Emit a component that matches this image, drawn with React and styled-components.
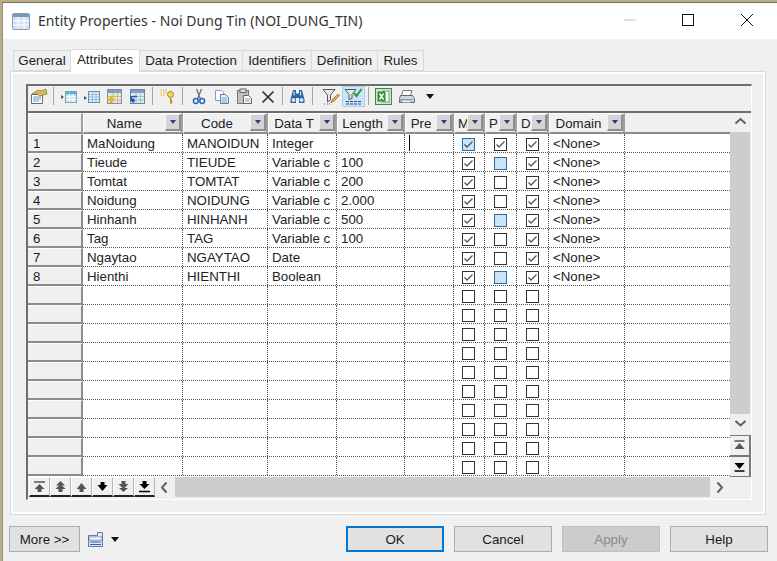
import React from "react";
import styled, { createGlobalStyle } from "styled-components";

const Global = createGlobalStyle`
  html, body { margin: 0; padding: 0; width: 777px; height: 561px; overflow: hidden; background: #b9ad84; }
  #root { width: 777px; height: 561px; }
  * { box-sizing: border-box; }
`;
const UI = `"Liberation Sans", Arial, sans-serif`;
const TITLE = `"Noto Sans", "Open Sans", sans-serif`;

const Win = styled.div`
  margin: 2px 0 0 2px; width: 775px; height: 559px; background: #f0f0f0;
  border-left: 1px solid #8d8d8d; border-top: 1px solid #6f6f6f;
  display: flex; flex-direction: column; font-family: ${UI}; color: #1a1a1a;
`;
const TitleBar = styled.div`
  height: 36px; background: #fff; display: flex; align-items: center; padding-left: 9px; flex: none;
`;
const TitleText = styled.div`
  font-family: ${TITLE}; font-size: 14px; color: #333; margin-left: 8px; flex: 1; white-space: nowrap;
  letter-spacing: .05px; padding-bottom: 2px;
`;
const WinBtn = styled.div`
  width: ${p => p.$w || 58}px; height: 36px; display: flex; align-items: center; justify-content: center; flex: none;
  padding-bottom: 2px;
`;
const Tabs = styled.div`
  display: flex; align-items: flex-end; height: 32px; padding-left: 10px; flex: none; position: relative; z-index: 1;
`;
const Tab = styled.div`
  height: ${p => (p.$active ? 23 : 21)}px; width: ${p => p.$w}px;
  background: ${p => (p.$active ? "#fff" : "#f0f0f0")};
  border: 1px solid #d9d9d9; border-bottom: ${p => (p.$active ? "none" : "1px solid #d9d9d9")};
  border-left: ${p => (p.$first ? "1px solid #d9d9d9" : "none")};
  margin-bottom: ${p => (p.$active ? -1 : 0)}px;
  font-size: 13.3px; display: flex; align-items: center; justify-content: center; padding-bottom: ${p => (p.$active ? 3 : 0)}px;
  white-space: nowrap; color: #222;
`;
const Panel = styled.div`
  width: 756px; height: 444px; margin-left: 7px; flex: none;
  border: 1px solid #d9d9d9; box-shadow: inset 0 0 0 2px #fff;
  padding: 12px 13px 0 15px;
`;
const Grid = styled.div`
  width: 726px; height: 416px; border-left: 2px solid #6e6e6e; border-top: 2px solid #6e6e6e;
  border-right: 1px solid #fff; border-bottom: 1px solid #fff;
  display: flex; flex-direction: column; background: #f0f0f0;
`;
const Toolbar = styled.div`
  height: 27px; display: flex; align-items: flex-start; margin-left: -1px; flex: none;
  position: relative;
  &::after { content: ""; position: absolute; left: 1px; right: 0; bottom: 0; height: 2px; background: #6e6e6e; }
`;
const ToolBtn = styled.div`
  width: 23px; height: 21px; display: flex; align-items: center; justify-content: center; flex: none;
  background: ${p => (p.$on ? "#cce4f7" : "transparent")};
  border: 1px solid ${p => (p.$on ? "#a8d0ef" : "transparent")};
`;
const ToolSep = styled.div`
  width: ${p => p.$w}px; height: 20px; flex: none; position: relative;
  &::after { content: ""; position: absolute; left: 3px; top: 1px; bottom: 1px; width: 1px; background: #a6a6a6; }
`;
const Main = styled.div`
  display: flex; height: 385px; flex: none;
`;
const Table = styled.div`
  width: 702px; flex: none; display: flex; flex-direction: column; background: #fff; height: 364px;
`;
const HeadRow = styled.div`
  display: flex; height: 21px; background: #f0f0f0; flex: none;
`;
const HeadCell = styled.div`
  width: ${p => p.$w}px; flex: none; height: 21px; display: flex; align-items: center; position: relative;
  border-right: 2px solid #a0a0a0; border-bottom: 2px solid #8c8c8c; font-size: 13.3px; color: #222;
  border-left: 1px solid #fff; border-top: 1px solid #fff;
  padding-right: 16px; white-space: nowrap;
`;
const HeadLabel = styled.span`
  flex: 1; text-align: ${p => (p.$left ? "left" : "center")}; padding-left: ${p => (p.$left ? 3 : 0)}px;
`;
const Sort = styled.div`
  position: absolute; right: 0; top: 0; width: 16px; height: 17px; background: #d4d4d4;
  border-top: 1px solid #f4f4f4; border-left: 1px solid #f4f4f4; border-right: 2px solid #8f8f8f; border-bottom: 2px solid #8f8f8f;
  display: flex; align-items: center; justify-content: center;
  &::after { content: ""; border-left: 3.5px solid transparent; border-right: 3.5px solid transparent; border-top: 4px solid #45307f; }
`;
const HeadEmpty = styled.div`
  flex: 1; height: 21px; border-bottom: 2px solid #8c8c8c; background: #f0f0f0;
`;
const Row = styled.div`
  display: flex; height: 19px; flex: none; border-bottom: 1px dotted #555;
`;
const RowHead = styled.div`
  width: 55px; margin-bottom: -1px; height: 19px; flex: none; background: #f0f0f0; border-right: 2px solid #8c8c8c; border-bottom: 2px solid #8c8c8c;
  border-top: 1px solid #fff;
  font-size: 13.3px; padding-left: 5px; line-height: 17px;
`;
const Cell = styled.div`
  width: ${p => p.$w}px; flex: none; height: 18px; border-right: 1px dotted #555; font-size: 13.3px; line-height: 19px;
  padding-left: 4px; white-space: nowrap; overflow: hidden; color: #222; position: relative;
  display: ${p => (p.$center ? "flex" : "block")}; align-items: center; justify-content: center;
  ${p => (p.$center ? `padding: 2px ${p.$pr || 0}px 0 0;` : "")}
`;
const Fill = styled.div`flex: 1;`;
const Caret = styled.div`
  position: absolute; left: 4px; top: 1px; width: 1px; height: 16px; background: #000;
`;
const Box = styled.div`
  width: 13px; height: 13px; border: 1px solid ${p => (p.$blue ? "#2a6a9e" : "#333")};
  background: ${p => (p.$blue ? "#cce4f7" : "#fff")}; display: flex; align-items: center; justify-content: center;
`;
const VScroll = styled.div`
  width: 20px; flex: none; display: flex; flex-direction: column; height: 385px;
`;
const VArrow = styled.div`
  height: ${p => p.$h}px; flex: none; display: flex; align-items: center; justify-content: center;
`;
const VThumb = styled.div`
  height: 282px; flex: none; background: #cdcdcd;
`;
const NavV = styled.div`
  height: 21px; width: 21px; flex: none; display: flex; align-items: center; justify-content: center;
  background: #f0f0f0; border-top: 1px solid #777; border-right: 2px solid #777; border-bottom: 1px solid #777;
`;
const HBar = styled.div`
  display: flex; height: 20px; flex: none; margin-top: -21px; position: relative; width: 702px; padding-left: 1px;
`;
const NavH = styled.div`
  width: 21px; height: 20px; flex: none; display: flex; align-items: center; justify-content: center;
  border-top: 1px solid #fff; border-left: 1px solid #fff; border-right: 1px solid #b5b5b5; border-bottom: 2px solid #222;
`;
const HArrow = styled.div`
  width: 20px; height: 20px; flex: none; display: flex; align-items: center; justify-content: center;
`;
const HThumb = styled.div`
  flex: 1; height: 20px; background: #cdcdcd;
`;
const Footer = styled.div`
  display: flex; align-items: center; padding: 11px 9px 0 6px; flex: none;
`;
const Btn = styled.div`
  width: ${p => p.$w || 98}px; height: 26px; flex: none; display: flex; align-items: center; justify-content: center;
  font-size: 13.3px; margin-left: ${p => p.$ml || 0}px;
  background: ${p => (p.$disabled ? "#cccccc" : "#e1e1e1")};
  border: ${p => (p.$def ? "2px solid #0078d7" : p.$disabled ? "1px solid #bfbfbf" : "1px solid #adadad")};
  color: ${p => (p.$disabled ? "#8a8a8a" : "#1a1a1a")};
`;
const ReportIcon = styled.div`
  margin-left: 8px; display: flex; align-items: center; gap: 8px; flex: 1;
`;

const TableIcon = () => (
  <svg width="18" height="17" viewBox="0 0 18 17">
    <rect x=".5" y=".5" width="17" height="16" rx="1" fill="#d4e3f4" stroke="#8b99ad" />
    <rect x="1" y="1" width="16" height="3" fill="#7398c4" />
    <path d="M1 8h16M1 12h16M6 4v12M12 4v12" stroke="#fff" strokeWidth="1" />
  </svg>
);

const gridTbl = (fill, head) => (
  <>
    <rect x="5.5" y="2.5" width="11" height="11" fill={fill} stroke="#7ba4c2" />
    <rect x="6" y="3" width="10" height="2.500" fill={head} />
    <path d="M6 7.500h10M6 10.500h10M9.500 5v8M13 5v8" stroke="#fff" />
  </>
);

const Drop = () => (
  <svg width="8" height="5" viewBox="0 0 8 5"><path d="M0 0h8L4 5z" fill="#111" /></svg>
);

const Ic = {
  props: (
    <svg width="18" height="17" viewBox="0 0 18 17">
      <path d="M1.500 6.500h11v9h-11z" fill="#fff" stroke="#6b6b6b" />
      <path d="M3 9h8M3 11h8M3 13h6" stroke="#6f9bc4" />
      <path d="M2 6l6-4 3 1 5-2 1 5-4 1-3 1-3-2z" fill="#dcb95a" stroke="#8a7230" strokeWidth=".7" />
    </svg>
  ),
  addEnd: (
    <svg width="18" height="16" viewBox="0 0 18 16">
      {gridTbl("#c6e8f1", "#58b6d6")}
      <path d="M1 6l3 2-3 2z" fill="#1f5f9c" />
    </svg>
  ),
  addIns: (
    <svg width="18" height="16" viewBox="0 0 18 16">
      <rect x="5.500" y="2.500" width="11" height="11" fill="#dcecf7" stroke="#6d8cab" />
      <path d="M6 5.500h10M6 8h10M6 10.500h10M9.500 3v10M13 3v10" stroke="#8bacc6" strokeWidth=".7" />
      <path d="M1 7l3 2-3 2z" fill="#1f5f9c" />
    </svg>
  ),
  addPlus: (
    <svg width="17" height="17" viewBox="0 0 17 17">
      <rect x="1.500" y="1.500" width="14" height="14" fill="#ece8cc" stroke="#8090a6" />
      <rect x="2" y="2" width="13" height="3" fill="#7aa0c6" />
      <path d="M7 5v10M11.500 5v10M2 8.500h13M2 12h13" stroke="#bcb377" strokeWidth=".8" />
      <path d="M5 8v7M1.500 11.500h7" stroke="#e4b62a" strokeWidth="2.400" />
    </svg>
  ),
  addLink: (
    <svg width="17" height="17" viewBox="0 0 17 17">
      <rect x="1.500" y="1.500" width="14" height="14" fill="#dcebf4" stroke="#6d85a0" />
      <rect x="2" y="2" width="13" height="3" fill="#7aa0c6" />
      <path d="M7 5v10M11.500 5v10M2 8.500h13M2 12h13" stroke="#98b8cd" strokeWidth=".8" />
      <path d="M8 8.500H4a2 2 0 0 0 0 4h2M5 10.500l-2.500 2 2.500 2" fill="none" stroke="#1d58a5" strokeWidth="1.600" />
    </svg>
  ),
  key: (
    <svg width="17" height="17" viewBox="0 0 17 17">
      <path d="M1.500 2h7M1.500 4.500h7M1.500 7h4" stroke="#e3c75b" strokeWidth="1.500" strokeDasharray="1.500 1" />
      <circle cx="11.500" cy="6.500" r="3" fill="#f1d36c" stroke="#a8841d" />
      <path d="M11.500 9.500v6l1.500-1v-1.200l-1-.5 1-.8" fill="#e7c24e" stroke="#a8841d" strokeWidth=".9" />
    </svg>
  ),
  cut: (
    <svg width="14" height="17" viewBox="0 0 14 17">
      <path d="M4.500 1l4 10M9.500 1l-4 10" stroke="#6d7176" strokeWidth="1.300" />
      <circle cx="3.800" cy="13" r="2.400" fill="none" stroke="#2f68b0" strokeWidth="1.500" />
      <circle cx="10.200" cy="13" r="2.400" fill="none" stroke="#2f68b0" strokeWidth="1.500" />
    </svg>
  ),
  copy: (
    <svg width="16" height="16" viewBox="0 0 16 16">
      <path d="M1.500 1.500h6l2 2v8h-8z" fill="#fff" stroke="#8d9db4" />
      <path d="M6.500 5.500h5l3 3v6h-8z" fill="#e2effa" stroke="#5580b3" />
      <path d="M8 9h5M8 11h5M8 13h5" stroke="#7ea3c9" />
    </svg>
  ),
  paste: (
    <svg width="17" height="17" viewBox="0 0 17 17">
      <rect x="1.500" y="2.500" width="11" height="13" fill="#c2c2c2" stroke="#777" />
      <rect x="4" y="1" width="6" height="3.500" fill="#ddd" stroke="#666" />
      <path d="M7.500 7.500h5l3 3v5h-8z" fill="#fff" stroke="#666" />
      <path d="M9 11h5M9 13h5" stroke="#999" />
    </svg>
  ),
  del: (
    <svg width="14" height="14" viewBox="0 0 14 14">
      <path d="M1.500 1.500l11 11M12.500 1.500l-11 11" stroke="#333" strokeWidth="1.700" />
    </svg>
  ),
  find: (
    <svg width="17" height="15" viewBox="0 0 17 15">
      <path d="M4 1h3v3.500h3V1h3l2.500 9.500v3.500h-5.500v-5h-3v5H1.500v-3.500z" fill="#2f639e" />
      <circle cx="4.500" cy="11" r="2" fill="#cfe2f5" />
      <circle cx="12.500" cy="11" r="2" fill="#cfe2f5" />
      <rect x="4.500" y="2.500" width="1.200" height="4" fill="#cfe2f5" />
      <rect x="11" y="2.500" width="1.200" height="4" fill="#cfe2f5" />
    </svg>
  ),
  filterPen: (
    <svg width="18" height="17" viewBox="0 0 18 17">
      <path d="M1 1.500h12l-4.500 5.500v5l-3 2v-7z" fill="#e9e9e9" stroke="#595959" />
      <path d="M10 12l6-6 1.500 1.500-6 6-2.500 1z" fill="#e3ac4d" stroke="#8a5b14" strokeWidth=".7" />
      <path d="M5 16h1M7 16h1M2 16h1" stroke="#555" />
    </svg>
  ),
  filterCheck: (
    <svg width="19" height="18" viewBox="0 0 19 18">
      <path d="M1 1.500h11l-4 5v4l-3 1v-5z" fill="#dfe8ee" stroke="#595959" />
      <path d="M10 5l2.500 3L17.500 1" fill="none" stroke="#2c9a2c" strokeWidth="2" />
      <path d="M2 13.500h15M2 16h15" stroke="#333b8a" strokeWidth="1.200" strokeDasharray="3 1" />
    </svg>
  ),
  excel: (
    <svg width="17" height="17" viewBox="0 0 17 17">
      <rect x=".5" y=".5" width="16" height="16" fill="#cfe6c9" stroke="#3c8a40" />
      <rect x="8" y="3" width="6" height="11" fill="#fff" stroke="#6fa56f" />
      <rect x="2.500" y="3.500" width="8" height="10" fill="#2f8f3a" />
      <path d="M4.500 5.500l4 6M8.500 5.500l-4 6" stroke="#fff" strokeWidth="1.400" />
    </svg>
  ),
  print: (
    <svg width="17" height="16" viewBox="0 0 17 16">
      <path d="M5 1.500h9l-1.500 5h-9z" fill="#fff" stroke="#6a7a8a" />
      <path d="M2.500 6.500h12l2 3v4h-15v-4z" fill="#cfd8e0" stroke="#5c6a78" />
      <path d="M3 13.500l-1-3h13" fill="none" stroke="#8fa0b0" />
      <rect x="4" y="11" width="9" height="2.500" fill="#f2f2f2" stroke="#7a8896" strokeWidth=".6" />
    </svg>
  ),
  drop: <Drop />,
};

const Chev = ({ d }) => {
  const paths = {
    up: "M1.500 7.500L6.500 3l5 4.500",
    down: "M1.500 3l5 4.500 5-4.500",
    left: "M7.500 1.500L3 6.500l4.500 5",
    right: "M3.500 1.500L8 6.500l-4.500 5",
  };
  return (
    <svg width="13" height="13" viewBox="0 0 13 13">
      <path d={paths[d]} fill="none" stroke="#606060" strokeWidth="2" />
    </svg>
  );
};

const Check = () => (
  <svg width="11" height="11" viewBox="0 0 11 11">
    <path d="M1.500 5.500l2.500 2.500 5.500-5.500" fill="none" stroke="#555" strokeWidth="1.300" />
  </svg>
);

const NAV_PATHS = {
  top: <><path d="M1 2h11" strokeWidth="1.500" fill="none" /><path d="M6.500 4L1.500 9h3v3h4V9h3z" stroke="none" /></>,
  pgup: <><path d="M6.500 1L2 5.500h9z" stroke="none" /><path d="M6.500 4L1.500 9h3v3h4V9h3z" stroke="none" /></>,
  up: <path d="M6.500 3L1.500 9h3v3h4V9h3z" stroke="none" />,
  down: <path d="M4.500 2v3h-3l5 6 5-6h-3V2z" stroke="none" />,
  pgdn: <><path d="M4.500 1v3h-3l5 5 5-5h-3V1z" stroke="none" /><path d="M6.500 12L2 8h9z" stroke="none" /></>,
  bottom: <><path d="M4.500 1v3h-3l5 5 5-5h-3V1z" stroke="none" /><path d="M1 11.500h11" strokeWidth="1.500" fill="none" /></>,
  vtop: <><path d="M1.500 2h10" strokeWidth="1.500" fill="none" /><path d="M6.500 4L1.500 10h10z" stroke="none" /></>,
  vbottom: <><path d="M1.500 3h10L6.500 9z" stroke="none" /><path d="M1.500 11h10" strokeWidth="1.500" fill="none" /></>,
};
const NavGlyph = ({ type, color }) => (
  <svg width="13" height="13" viewBox="0 0 13 13" fill={color} stroke={color}>{NAV_PATHS[type]}</svg>
);

const COLS = [
  { k: "Name", w: 100 },
  { k: "Code", w: 85 },
  { k: "Data T", w: 69 },
  { k: "Length", w: 68 },
  { k: "Pre", w: 49 },
  { k: "M", w: 31, left: true },
  { k: "P", w: 32, left: true },
  { k: "D", w: 32, left: true },
  { k: "Domain", w: 76 },
];

const DATA = [
  ["MaNoidung", "MANOIDUN", "Integer", "", 2],
  ["Tieude", "TIEUDE", "Variable c", "100", 1],
  ["Tomtat", "TOMTAT", "Variable c", "200", 0],
  ["Noidung", "NOIDUNG", "Variable c", "2.000", 0],
  ["Hinhanh", "HINHANH", "Variable c", "500", 1],
  ["Tag", "TAG", "Variable c", "100", 0],
  ["Ngaytao", "NGAYTAO", "Date", "", 0],
  ["Hienthi", "HIENTHI", "Boolean", "", 1],
];

const TABS = [
  ["General", 58, false],
  ["Attributes", 69, true],
  ["Data Protection", 103, false],
  ["Identifiers", 69, false],
  ["Definition", 66, false],
  ["Rules", 46, false],
];

const TOOLS = [
  [Ic.props], 7, [Ic.addEnd], [Ic.addIns], [Ic.addPlus], [Ic.addLink], 7, [Ic.key], 8,
  [Ic.cut], [Ic.copy], [Ic.paste], [Ic.del], 7, [Ic.find], 10,
  [Ic.filterPen], [Ic.filterCheck, true], 7, [Ic.excel], [Ic.print], [Ic.drop],
];

const NAV = [["top", "#555"], ["pgup", "#555"], ["up", "#555"], ["down", "#000"], ["pgdn", "#555"], ["bottom", "#000"]];

export default function App() {
  const rows = Array.from({ length: 18 }, (_, i) => i);
  return (
    <>
      <Global />
      <Win>
        <TitleBar>
          <TableIcon />
          <TitleText>Entity Properties - Noi Dung Tin (NOI_DUNG_TIN)</TitleText>
          <WinBtn>
            <svg width="12" height="2" viewBox="0 0 12 2"><path d="M0 1h12" stroke="#c4c4c4" /></svg>
          </WinBtn>
          <WinBtn>
            <svg width="13" height="13" viewBox="0 0 13 13"><rect x=".5" y=".5" width="11" height="11" fill="none" stroke="#111" /></svg>
          </WinBtn>
          <WinBtn $w={60}>
            <svg width="14" height="14" viewBox="0 0 14 14"><path d="M1 1l12 12M13 1L1 13" stroke="#111" /></svg>
          </WinBtn>
        </TitleBar>
        <Tabs>
          {TABS.map(([t, w, a], i) => (
            <Tab key={t} $w={w} $active={a} $first={i === 0}>{t}</Tab>
          ))}
        </Tabs>
        <Panel>
          <Grid>
            <Toolbar>
              {TOOLS.map((t, i) =>
                typeof t === "number" ? <ToolSep key={i} $w={t} /> : <ToolBtn key={i} $on={t[1]}>{t[0]}</ToolBtn>
              )}
            </Toolbar>
            <Main>
              <Table>
                <HeadRow>
                  <HeadCell $w={55} />
                  {COLS.map(c => (
                    <HeadCell key={c.k} $w={c.w}>
                      <HeadLabel $left={c.left}>{c.k}</HeadLabel>
                      <Sort />
                    </HeadCell>
                  ))}
                  <HeadEmpty />
                </HeadRow>
                {rows.map(i => {
                  const d = DATA[i];
                  return (
                    <Row key={i}>
                      <RowHead>{d ? i + 1 : ""}</RowHead>
                      <Cell $w={100}>{d && d[0]}</Cell>
                      <Cell $w={85}>{d && d[1]}</Cell>
                      <Cell $w={69}>{d && d[2]}</Cell>
                      <Cell $w={68}>{d && d[3]}</Cell>
                      <Cell $w={49}>{i === 0 && <Caret />}</Cell>
                      <Cell $w={31} $center $pr={2}>
                        <Box $blue={i === 0}>{d && <Check />}</Box>
                      </Cell>
                      <Cell $w={32} $center>
                        <Box $blue={d && d[4] === 1}>{i === 0 && <Check />}</Box>
                      </Cell>
                      <Cell $w={32} $center>
                        <Box>{d && <Check />}</Box>
                      </Cell>
                      <Cell $w={76}>{d && "<None>"}</Cell>
                      <Fill />
                    </Row>
                  );
                })}
              </Table>
              <VScroll>
                <VArrow $h={19}><Chev d="up" /></VArrow>
                <VThumb />
                <VArrow $h={21}><Chev d="down" /></VArrow>
                <NavV><NavGlyph type="vtop" color="#555" /></NavV>
                <NavV><NavGlyph type="vbottom" color="#000" /></NavV>
              </VScroll>
            </Main>
            <HBar>
              {NAV.map(([t, c]) => <NavH key={t}><NavGlyph type={t} color={c} /></NavH>)}
              <HArrow><Chev d="left" /></HArrow>
              <HThumb />
              <HArrow><Chev d="right" /></HArrow>
            </HBar>
          </Grid>
        </Panel>
        <Footer>
          <Btn $w={71}>More &gt;&gt;</Btn>
          <ReportIcon>
            <svg width="15" height="15" viewBox="0 0 15 15">
              <path d="M.5 3.500h9v-3h5v14h-14z" fill="#dbe6f5" stroke="#5f7cae" />
              <rect x="1" y="5" width="13" height="3" fill="#fff" stroke="#3d5c94" strokeWidth=".6" />
              <path d="M2 10h11M2 12.500h11" stroke="#3d5c94" />
            </svg>
            <Drop />
          </ReportIcon>
          <Btn $def>OK</Btn>
          <Btn $ml={10}>Cancel</Btn>
          <Btn $ml={10} $disabled>Apply</Btn>
          <Btn $ml={10}>Help</Btn>
        </Footer>
      </Win>
    </>
  );
}
